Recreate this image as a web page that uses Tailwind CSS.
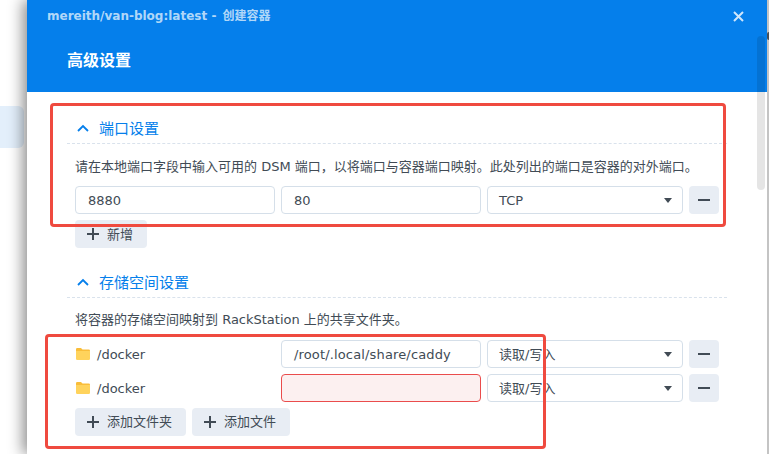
<!DOCTYPE html>
<html>

<head>
  <meta charset="utf-8">
  <script src="https://cdn.jsdelivr.net/npm/@tailwindcss/browser@4"></script>
  <title>创建容器</title>
</head>

<body class="overflow-hidden">
  <div class="relative flex h-[454px] w-[769px] overflow-hidden bg-white font-['DejaVu_Sans','Noto_Sans_CJK_SC',sans-serif] text-[13px] text-[#414b55]">
    <!-- page behind the dialog -->
    <div class="w-[27px] shrink-0 pt-[106px]">
      <div class="h-[42px] w-[24px] rounded-r-md bg-[#e3effb]"></div>
    </div>

    <!-- dialog -->
    <div class="flex h-full w-[740px] shrink-0 flex-col shadow-[-4px_0_14px_rgba(0,0,0,0.45)]">
      <div class="flex h-[92px] shrink-0 flex-col bg-[#057feb]">
        <div class="flex h-[32px] items-center justify-between pl-[20px] pr-[23px]">
          <span class="text-[12px] font-bold text-white/70">mereith/van-blog:latest - <span class="ml-[2px]">创建容器</span></span>
          <svg width="11" height="11" viewBox="0 0 11 11" fill="none" stroke="#cfe6fb" stroke-width="2"><path d="M1 1l9 9M10 1l-9 9" /></svg>
        </div>
        <h1 class="pl-[40px] pt-[17px] text-[16px] font-bold leading-[24px] text-white">高级设置</h1>
      </div>

      <div class="flex-1 pl-[40px] pr-[40px]">
        <!-- ports -->
        <div class="flex h-[52px] items-end border-b border-dashed border-[#d9e2ec] pl-[10px] pb-[4px] text-[#057feb]">
          <svg class="mb-[7px] mr-[10px]" width="12" height="8" viewBox="0 0 12 8" fill="none" stroke="#057feb" stroke-width="1.800"><path d="M1 7l5-5 5 5" /></svg>
          <span class="text-[15px] leading-[20px]">端口设置</span>
        </div>
        <p class="ml-[8px] mt-[12px] whitespace-nowrap pt-[1px] text-[13px] leading-[20px]">请在本地端口字段中输入可用的 DSM 端口，以将端口与容器端口映射。此处列出的端口是容器的对外端口。</p>
        <div class="ml-[8px] mt-[9px] flex gap-[6px]">
          <div class="flex h-[28px] w-[200px] items-center rounded border border-[#d5dfe9] px-[12px] pt-[2px]">8880</div>
          <div class="flex h-[28px] w-[200px] items-center rounded border border-[#d5dfe9] px-[12px] pt-[2px]">80</div>
          <div class="flex h-[28px] w-[196px] items-center justify-between rounded border border-[#d5dfe9] pl-[11px] pr-[10px] pt-[2px]">TCP<svg class="mb-[2px]" width="8" height="5" viewBox="0 0 8 5"><path d="M0 0h8L4 5z" fill="#414b55" /></svg></div>
          <div class="flex h-[28px] w-[30px] items-center justify-center rounded bg-[#e8edf4]"><div class="h-[2px] w-[12px] bg-[#414b55]"></div></div>
        </div>
        <button class="ml-[8px] mt-[6px] flex h-[28px] w-[72px] items-center gap-[8px] rounded bg-[#e8edf4] pl-[12px]">
          <svg width="12" height="12" viewBox="0 0 12 12" stroke="#414b55" stroke-width="2"><path d="M6 0v12M0 6h12" /></svg><span class="pt-[2px]">新增</span>
        </button>

        <!-- storage -->
        <div class="mt-[14px] flex h-[36px] items-end border-b border-dashed border-[#d9e2ec] pl-[10px] pb-[4px] text-[#057feb]">
          <svg class="mb-[7px] mr-[10px]" width="12" height="8" viewBox="0 0 12 8" fill="none" stroke="#057feb" stroke-width="1.800"><path d="M1 7l5-5 5 5" /></svg>
          <span class="text-[15px] leading-[20px]">存储空间设置</span>
        </div>
        <p class="ml-[8px] mt-[12px] whitespace-nowrap text-[13px] leading-[20px]">将容器的存储空间映射到 RackStation 上的共享文件夹。</p>
        <div class="ml-[8px] mt-[10px] flex gap-[6px]">
          <div class="flex h-[28px] w-[200px] items-center gap-[7px] pl-[1px]">
            <svg width="14" height="12" viewBox="0 0 14 12"><path d="M0 1.200A1.200 1.200 0 0 1 1.200 0H5l1.500 1.500h6.300A1.200 1.200 0 0 1 14 2.700V4H0z" fill="#f9bd3a" /><path d="M0 3h14v7.800a1.200 1.200 0 0 1-1.200 1.200H1.200A1.200 1.200 0 0 1 0 10.800z" fill="#ffd35c" /></svg><span class="pt-[2px]">/docker</span>
          </div>
          <div class="flex h-[28px] w-[200px] items-center rounded border border-[#d5dfe9] px-[12px] pt-[2px] tracking-[0.15px]">/root/.local/share/caddy</div>
          <div class="flex h-[28px] w-[196px] items-center justify-between rounded border border-[#d5dfe9] pl-[11px] pr-[10px] pt-[2px]">读取/写入<svg class="mb-[2px]" width="8" height="5" viewBox="0 0 8 5"><path d="M0 0h8L4 5z" fill="#414b55" /></svg></div>
          <div class="flex h-[28px] w-[30px] items-center justify-center rounded bg-[#e8edf4]"><div class="h-[2px] w-[12px] bg-[#414b55]"></div></div>
        </div>
        <div class="ml-[8px] mt-[6px] flex gap-[6px]">
          <div class="flex h-[28px] w-[200px] items-center gap-[7px] pl-[1px]">
            <svg width="14" height="12" viewBox="0 0 14 12"><path d="M0 1.200A1.200 1.200 0 0 1 1.200 0H5l1.500 1.500h6.300A1.200 1.200 0 0 1 14 2.700V4H0z" fill="#f9bd3a" /><path d="M0 3h14v7.800a1.200 1.200 0 0 1-1.200 1.200H1.200A1.200 1.200 0 0 1 0 10.800z" fill="#ffd35c" /></svg><span class="pt-[2px]">/docker</span>
          </div>
          <div class="h-[28px] w-[200px] rounded border border-[#ea4c4c] bg-[#fcf0f0]"></div>
          <div class="flex h-[28px] w-[196px] items-center justify-between rounded border border-[#d5dfe9] pl-[11px] pr-[10px] pt-[2px]">读取/写入<svg class="mb-[2px]" width="8" height="5" viewBox="0 0 8 5"><path d="M0 0h8L4 5z" fill="#414b55" /></svg></div>
          <div class="flex h-[28px] w-[30px] items-center justify-center rounded bg-[#e8edf4]"><div class="h-[2px] w-[12px] bg-[#414b55]"></div></div>
        </div>
        <div class="ml-[8px] mt-[6px] flex gap-[6px]">
          <button class="flex h-[28px] w-[111px] items-center gap-[8px] rounded bg-[#e8edf4] pl-[12px]">
            <svg width="12" height="12" viewBox="0 0 12 12" stroke="#414b55" stroke-width="2"><path d="M6 0v12M0 6h12" /></svg>添加文件夹
          </button>
          <button class="flex h-[28px] w-[98px] items-center gap-[8px] rounded bg-[#e8edf4] pl-[12px]">
            <svg width="12" height="12" viewBox="0 0 12 12" stroke="#414b55" stroke-width="2"><path d="M6 0v12M0 6h12" /></svg>添加文件
          </button>
        </div>
      </div>
    </div>

    <!-- scrollbar -->
    <div class="absolute left-[757px] top-[36px] h-[154px] w-[8px] rounded-full bg-black/10"></div>
    <!-- strip of the page right of the dialog -->
    <div class="absolute left-[767px] top-0 h-full w-[2px] bg-[#c4c4c4]"></div>
    <div class="absolute left-[767px] top-[32px] h-[8px] w-[2px] rounded-l-sm bg-[#4a4f55]"></div>

    <!-- red annotation boxes -->
    <div class="absolute left-[50px] top-[103px] h-[124px] w-[676px] rounded-sm border-[3px] border-[#ef4a3f]"></div>
    <div class="absolute left-[45px] top-[334px] h-[115px] w-[501px] rounded-sm border-[3px] border-[#ef4a3f]"></div>
  </div>
</body>

</html>
